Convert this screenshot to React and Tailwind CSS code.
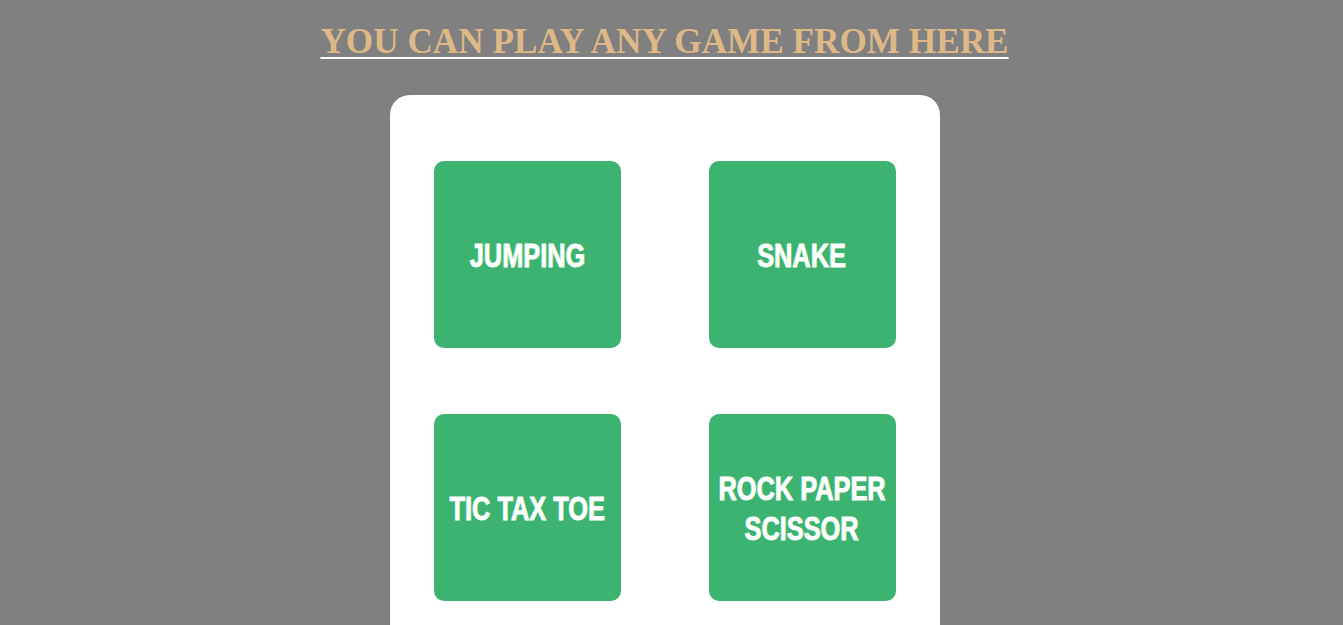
import React from 'react';

const games = [['JUMPING'], ['SNAKE'], ['TIC TAX TOE'], ['ROCK PAPER', 'SCISSOR']];

const GameCard = ({ lines }) => (
  <button className="w-[187px] h-[187px] rounded-[10px] bg-[#3cb371] flex flex-col items-center justify-center text-white text-[34px] leading-[40px] font-bold whitespace-nowrap [font-family:'Liberation_Sans',Arial,sans-serif] [-webkit-text-stroke:0.8px_white] [text-shadow:-1px_0_0_rgba(0,255,255,0.35),1px_0_0_rgba(255,255,0,0.3)]">
    {lines.map((l) => (
      <span key={l} className="block scale-x-[0.745]">
        {l}
      </span>
    ))}
  </button>
);

export default function App() {
  return (
    <div className="min-h-[700px] bg-[#808080] pr-[14px]">
      <div className="flex flex-col items-center">
        <h1 className="mt-[21px] text-[35.2px] leading-[41px] font-bold text-[#deb887] underline decoration-white decoration-[2px] underline-offset-[4px] [font-family:'Liberation_Serif',serif]">
          YOU CAN PLAY ANY GAME FROM HERE
        </h1>
        <div className="mt-[33px] w-[550px] bg-white rounded-[20px] pt-[66px] pb-[66px] px-[44px]">
          <div className="grid grid-cols-2 gap-x-[88px] gap-y-[66px]">
            {games.map((g) => (
              <GameCard key={g.join(' ')} lines={g} />
            ))}
          </div>
        </div>
      </div>
    </div>
  );
}
